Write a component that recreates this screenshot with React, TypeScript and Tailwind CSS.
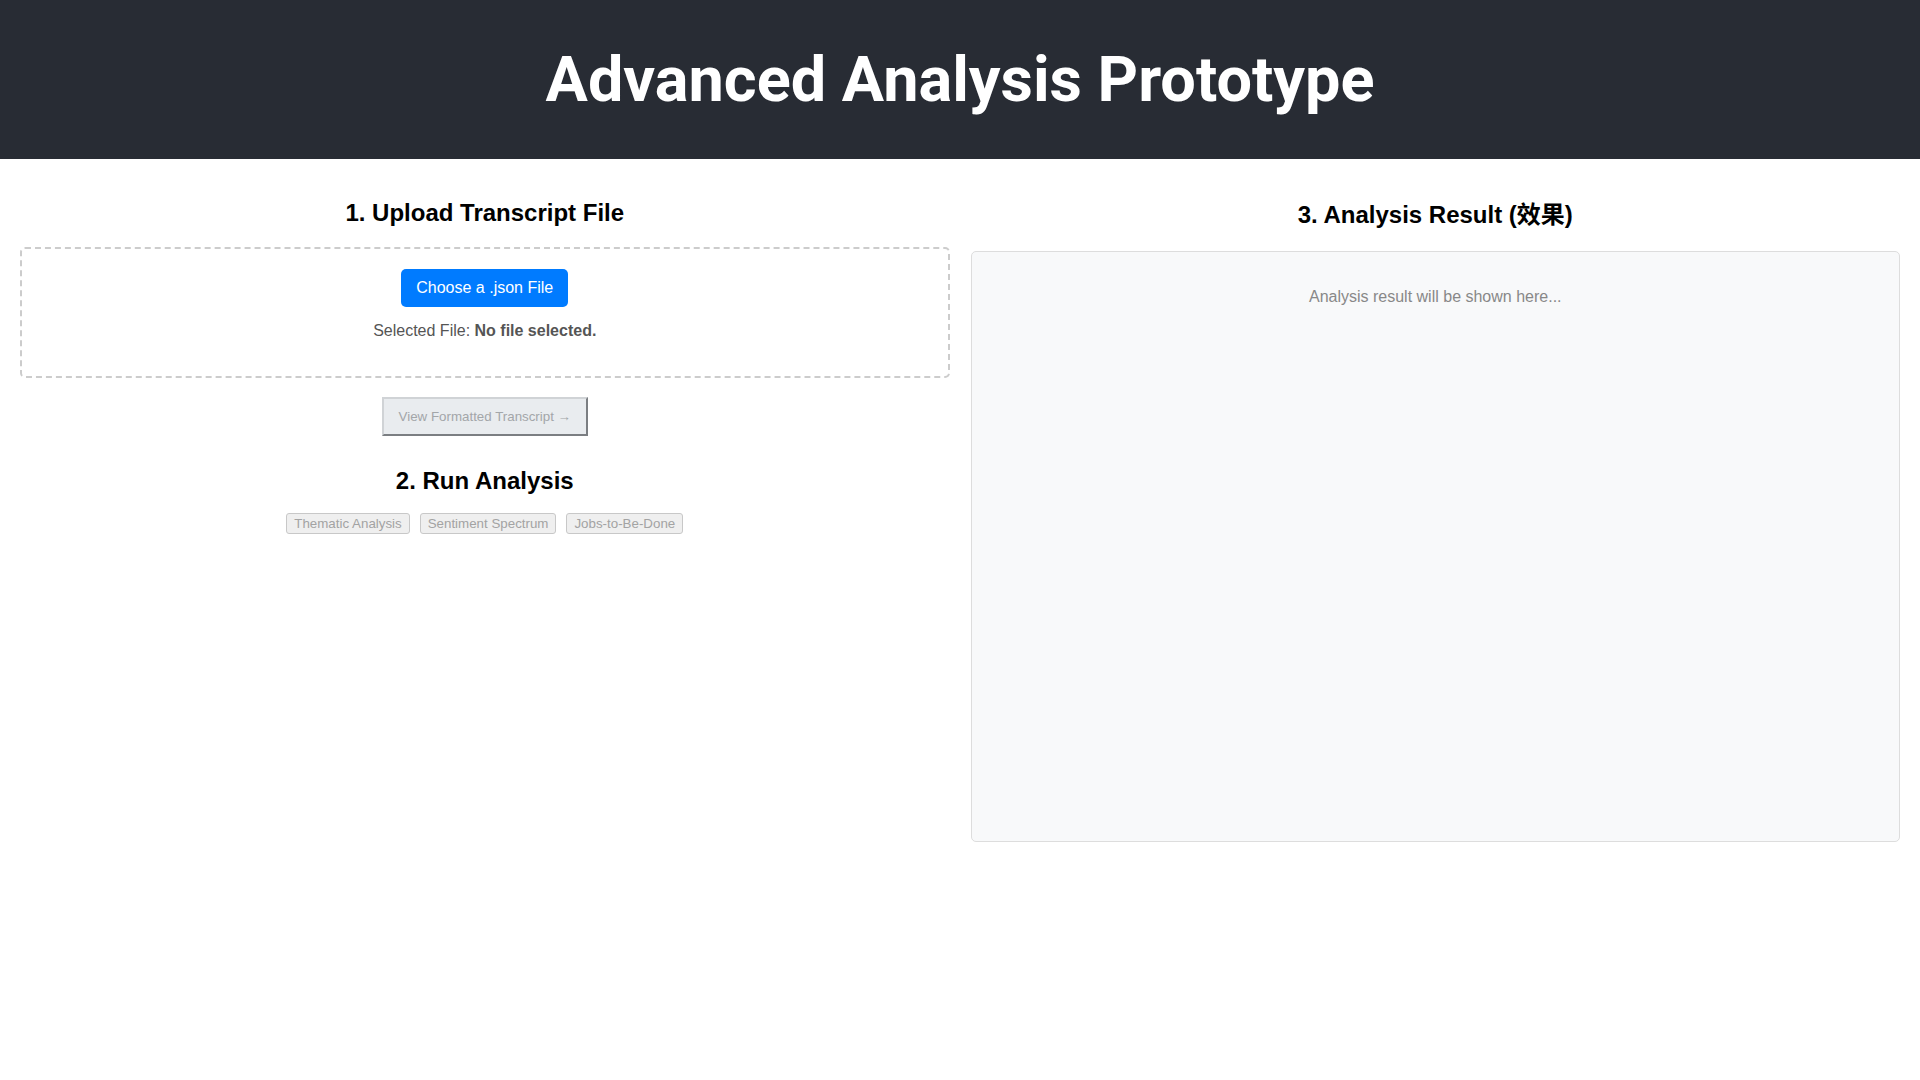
const sans = 'font-["Liberation_Sans","Noto_Sans_CJK_SC",Arial,sans-serif]'

function AnalysisButton({ label }: { label: string }) {
  return (
    <button
      type="button"
      disabled
      className="h-[21px] rounded-[3px] border border-[#c8c8c8] bg-[#efefef] px-[7px] text-[13.33px] leading-[17px] text-[#a3a3a3]"
    >
      {label}
    </button>
  )
}

export default function App() {
  const analyses = ['Thematic Analysis', 'Sentiment Spectrum', 'Jobs-to-Be-Done']

  return (
    <div className={`min-h-screen bg-white text-black ${sans}`}>
      <header className="flex h-[159px] items-center justify-center bg-[#282c34]">
        <h1 className='font-["Roboto",sans-serif] text-[63px] font-bold leading-[75px] text-white'>
          Advanced Analysis Prototype
        </h1>
      </header>

      <main className="grid grid-cols-2 gap-[21px] p-[20px]">
        {/* left: upload + run */}
        <section className="flex flex-col items-center">
          <h2 className="mt-[20px] mb-[20px] text-[24px] font-bold leading-[28px]">
            1. Upload Transcript File
          </h2>

          <div className="flex w-full flex-col items-center rounded-[5px] border-2 border-dashed border-[#cccccc] p-[20px]">
            <button
              type="button"
              className="h-[38px] rounded-[5px] bg-[#007bff] px-[15px] text-[16px] text-white"
            >
              Choose a .json File
            </button>
            <p className="mt-[15px] mb-[16px] text-[16px] leading-[18px] text-[#555555]">
              Selected File: <strong className="font-bold">No file selected.</strong>
            </p>
          </div>

          <button
            type="button"
            disabled
            className="mt-[19px] h-[39px] border-2 border-t-[#d0d3d6] border-l-[#d0d3d6] border-b-[#7b7e82] border-r-[#7b7e82] bg-[#e9ecef] px-[15px] text-[13.33px] text-[#a3a6a9]"
          >
            View Formatted Transcript →
          </button>

          <h2 className="mt-[31px] mb-[18px] text-[24px] font-bold leading-[28px]">
            2. Run Analysis
          </h2>

          <div className="flex gap-[10px]">
            {analyses.map((a) => (
              <AnalysisButton key={a} label={a} />
            ))}
          </div>
        </section>

        {/* right: result */}
        <section className="flex flex-col items-center">
          <h2 className="mt-[20px] mb-[20px] h-[32px] text-[24px] font-bold leading-[32px]">
            3. Analysis Result (效果)
          </h2>
          <div className="h-[591px] w-full rounded-[5px] border border-[#dddddd] bg-[#f8f9fa] p-[20px]">
            <p className="mt-[16px] text-center text-[16px] leading-[18px] text-[#888888]">
              Analysis result will be shown here...
            </p>
          </div>
        </section>
      </main>
    </div>
  )
}
